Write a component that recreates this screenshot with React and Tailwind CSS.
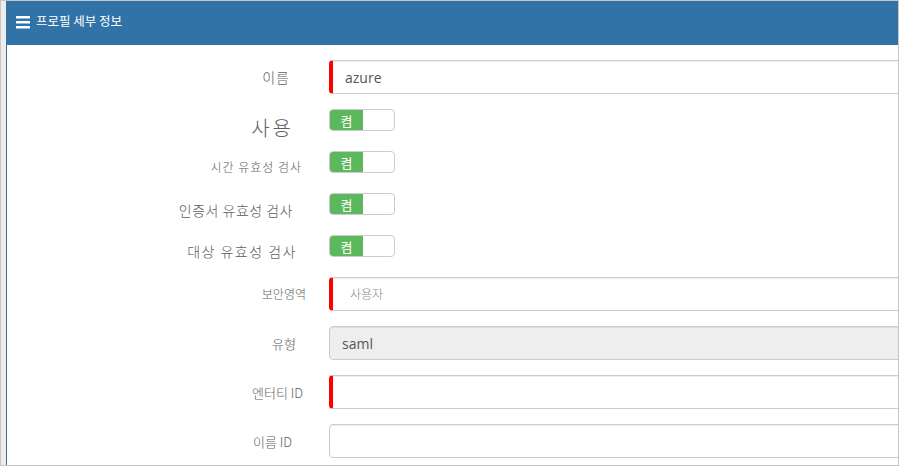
const label = 'text-right text-[#606060] font-light leading-none'
const kr = { fontFamily: '"Noto Sans CJK KR", "Noto Sans", sans-serif' }

function Toggle() {
  return (
    <div className="flex h-[22px] w-[66px] overflow-hidden rounded-[4px] border border-[#cccccc] bg-white">
      <div className="flex w-[33px] items-center justify-center bg-[#5cb85c] text-[13px] leading-none text-white" style={kr}>
        켬
      </div>
    </div>
  )
}

function Field({ required, disabled, value, placeholder }) {
  return (
    <div
      className={`flex h-[34px] w-[700px] items-center rounded-[4px] border border-[#cccccc] shadow-[inset_0_1px_1px_rgba(0,0,0,0.075)] ${required ? 'border-l-4 border-l-[#ff0000]' : ''} ${disabled ? 'bg-[#eeeeee]' : 'bg-white'}`}
    >
      {value && (
        <span className="px-3 text-[14px] text-[#555555]" style={{ fontFamily: '"Open Sans", sans-serif' }}>
          {value}
        </span>
      )}
      {placeholder && (
        <span className="pl-[17px] text-[12px] font-light text-[#8a8a8a]" style={kr}>
          {placeholder}
        </span>
      )}
    </div>
  )
}

function Row({ children, text, cls, h, mb }) {
  return (
    <div className={`flex items-center ${h} ${mb}`}>
      <div className={`w-[299px] shrink-0 ${label} ${cls}`} style={kr}>
        {text}
      </div>
      <div className="ml-[23px]">{children}</div>
    </div>
  )
}

export default function App() {
  return (
    <div className="h-[466px] w-[899px] overflow-hidden border border-[#c6c6c6] bg-[#ededed] pl-[5px]">
      <div className="flex h-full w-[1100px] flex-col border-l border-[#3273a7] bg-white">
        <div className="flex h-[44px] shrink-0 items-start gap-[6px] bg-[#3273a7] pl-[9px] pt-[13px]">
          <svg width="14" height="14" viewBox="0 0 14 14" className="mt-[2px] block">
            <rect x="0" y="0" width="14" height="2.6" rx="0.5" fill="#ffffff" />
            <rect x="0" y="5" width="14" height="2.6" rx="0.5" fill="#ffffff" />
            <rect x="0" y="10" width="14" height="2.6" rx="0.5" fill="#ffffff" />
          </svg>
          <span className="text-[12.5px] leading-[13px] text-white" style={kr}>프로필 세부 정보</span>
        </div>

        <div className="pt-[15px]">
          <Row text="이름" cls="pr-[16px] text-[14px] tracking-[1px]" h="h-[34px]" mb="mb-[15px]">
            <Field required value="azure" />
          </Row>
          <Row text="사용" cls="pr-[12px] pt-[15px] text-[20px] tracking-[3px]" h="h-[22px]" mb="mb-[20px]">
            <Toggle />
          </Row>
          <Row text="시간 유효성 검사" cls="pr-[4px] pt-[9px] text-[12px] tracking-[1px]" h="h-[22px]" mb="mb-[20px]">
            <Toggle />
          </Row>
          <Row text="인증서 유효성 검사" cls="pr-[13px] pt-[12px] text-[14px] tracking-[0.5px]" h="h-[22px]" mb="mb-[20px]">
            <Toggle />
          </Row>
          <Row text="대상 유효성 검사" cls="pr-[9px] pt-[10px] text-[14px] tracking-[1.5px]" h="h-[22px]" mb="mb-[20px]">
            <Toggle />
          </Row>
          <Row text="보안영역" cls="pr-0 text-[12px]" h="h-[34px]" mb="mb-[15px]">
            <Field required placeholder="사용자" />
          </Row>
          <Row text="유형" cls="pr-[10px] text-[13px]" h="h-[34px]" mb="mb-[15px]">
            <Field disabled value="saml" />
          </Row>
          <Row text="엔터티 ID" cls="pr-[3px] text-[13px]" h="h-[34px]" mb="mb-[15px]">
            <Field required />
          </Row>
          <Row text="이름 ID" cls="pr-[14px] text-[13px]" h="h-[34px]" mb="mb-[15px]">
            <Field />
          </Row>
        </div>
      </div>
    </div>
  )
}
